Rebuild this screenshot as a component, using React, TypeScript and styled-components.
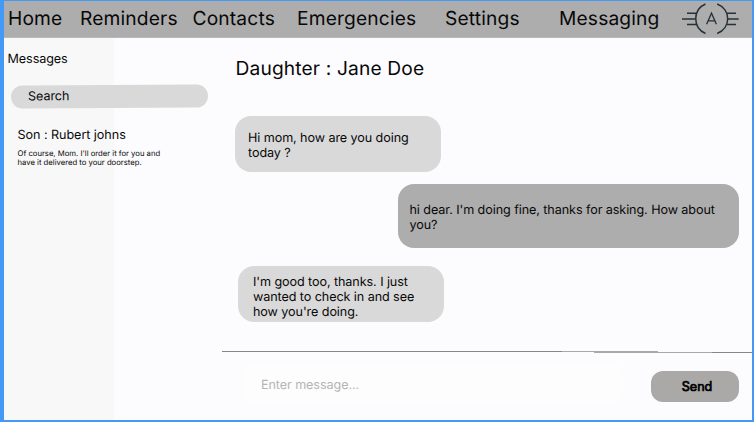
import React from "react";
import styled, { createGlobalStyle } from "styled-components";

const GlobalStyle = createGlobalStyle`
  * { box-sizing: border-box; }
  body {
    margin: 0;
    font-family: Inter, "Liberation Sans", sans-serif;
    font-optical-sizing: none;
    text-rendering: geometricPrecision;
    color: #080808;
  }
  p, h1, h2, h3 { margin: 0; font-weight: 400; }
`;

const Frame = styled.div`
  width: 754px;
  height: 422px;
  overflow: hidden;
  display: flex;
  flex-direction: column;
  background: #fcfcfe;
  border: solid #4499f7;
  border-width: 1px 2px 2px 4px;
`;

const Header = styled.header`
  flex: none;
  height: 37px;
  display: grid;
  grid-template-columns: 72px 112.5px 104.5px 148px 114px 122px 1fr;
  align-items: start;
  padding-left: 4px;
  background: #adadad;
  border-bottom: 1px solid #b9b9b9;
`;

const NavLink = styled.a`
  font-size: 19.2px;
  letter-spacing: 0.16px;
  line-height: 24px;
  padding-top: 5px;
  white-space: nowrap;
  color: #080808;
`;

const Logo = styled.svg`
  display: block;
  width: 60px;
  height: 36px;
`;

const Body = styled.div`
  flex: 1;
  min-height: 0;
  display: grid;
  grid-template-columns: 218px 1fr;
`;

const Sidebar = styled.aside`
  background: linear-gradient(to right, #f8f8f8 109.5px, transparent 109.5px);
`;

const SidebarTitle = styled.h2`
  padding: 13px 0 0 3.5px;
  font-size: 12.6px;
  letter-spacing: -0.08px;
  line-height: 17px;
`;

const Search = styled.div`
  width: 197px;
  height: 22.5px;
  margin: 16.5px 0 0 7.2px;
  padding-left: 17px;
  border-radius: 12px;
  background: #d9d9d9;
  transform: rotate(-0.3deg);
  font-size: 12.6px;
  letter-spacing: -0.08px;
  line-height: 23px;
`;

const Conversation = styled.section`
  padding: 21px 0 0 13.5px;
`;

const ConversationName = styled.h3`
  font-size: 12.6px;
  letter-spacing: -0.05px;
  line-height: 16px;
`;

const Preview = styled.p`
  width: 170px;
  margin-top: 5px;
  font-size: 7.7px;
  line-height: 9.4px;
`;

const Chat = styled.main`
  display: flex;
  flex-direction: column;
`;

const ChatTitle = styled.h1`
  padding: 18px 0 0 13.5px;
  font-size: 19.2px;
  letter-spacing: 0.14px;
  line-height: 24px;
`;

const Thread = styled.div`
  height: 271px;
  display: flex;
  flex-direction: column;
  align-items: flex-start;
  padding: 36px 13px 0 13px;
`;

const Bubble = styled.div<{ $sent?: boolean; $last?: boolean }>`
  width: ${(p) => (p.$sent ? 341 : 206)}px;
  height: ${(p) => (p.$sent ? 64 : 56)}px;
  flex: none;
  align-self: ${(p) => (p.$sent ? "flex-end" : "flex-start")};
  margin: ${(p) => (p.$sent ? "12px 0 18px" : p.$last ? "0 0 0 3px" : "0")};
  padding: ${(p) => (p.$sent ? "18.6px 11.5px 0" : p.$last ? "8.6px 20px 0 15px" : "15px 20px 0 13px")};
  border-radius: 16px;
  background: ${(p) => (p.$sent ? "#adadad" : "#d9d9d9")};
  font-size: 12.6px;
  letter-spacing: -0.08px;
  line-height: 15.2px;
`;

const Divider = styled.svg`
  display: block;
  flex: none;
  width: 100%;
  height: 3px;
`;

const Composer = styled.div`
  display: flex;
  align-items: center;
  justify-content: space-between;
  padding: 11px 13px 0 20px;
`;

const MessageField = styled.div`
  width: 381px;
  height: 38px;
  padding-left: 19px;
  border-radius: 10px;
  background: #fdfdfe;
  color: #b5b5b5;
  font-size: 12.6px;
  letter-spacing: -0.08px;
  line-height: 41px;
`;

const SendButton = styled.button`
  width: 88px;
  height: 31px;
  margin-top: 4px;
  padding: 0 0 0 4px;
  border: 0;
  border-radius: 12px;
  background: #aaa9a8;
  color: #000;
  font: 400 12.6px/31px Inter, sans-serif;
  -webkit-text-stroke: 0.7px #000;
`;

const links = ["Home", "Reminders", "Contacts", "Emergencies", "Settings", "Messaging"];

export default function App() {
  return (
    <>
      <GlobalStyle />
      <Frame>
        <Header>
          {links.map((l) => (
            <NavLink key={l}>{l}</NavLink>
          ))}
          <Logo viewBox="681 1 60 36" fill="none" stroke="#263238" strokeWidth="1.5">
            <path d="M705.500 4C692.500 9.500 692.500 28 705.500 33.500M717.200 4C731.200 9.500 731.200 28 717.200 33.500" />
            <path d="M687 13.200H696.500M682 18.900H695.500M687 24.400H696.500M727 13.200H736M727.500 18.900H738.700M727 24.400H736" />
            <path strokeWidth="1.3" d="M706.600 24.300L711.500 13.200L716.400 24.300M708.200 20.900H714.800" />
          </Logo>
        </Header>
        <Body>
          <Sidebar>
            <SidebarTitle>Messages</SidebarTitle>
            <Search>Search</Search>
            <Conversation>
              <ConversationName>Son : Rubert johns</ConversationName>
              <Preview>
                Of course, Mom. I'll order it for you and
                <br />
                have it delivered to your doorstep.
              </Preview>
            </Conversation>
          </Sidebar>
          <Chat>
            <ChatTitle>Daughter : Jane Doe</ChatTitle>
            <Thread>
              <Bubble>
                Hi mom, how are you doing
                <br />
                today ?
              </Bubble>
              <Bubble $sent>
                hi dear. I'm doing fine, thanks for asking. How about
                <br />
                you?
              </Bubble>
              <Bubble $last>
                I'm good too, thanks. I just
                <br />
                wanted to check in and see
                <br />
                how you're doing.
              </Bubble>
            </Thread>
            <Divider viewBox="0 0 530 3" preserveAspectRatio="none">
              <path d="M0 0.500H340M490 1.500H530" stroke="#87878a" />
              <path d="M340 0.500H436M372 1.500H490" stroke="#a9a9ac" />
            </Divider>
            <Composer>
              <MessageField>Enter message...</MessageField>
              <SendButton>Send</SendButton>
            </Composer>
          </Chat>
        </Body>
      </Frame>
    </>
  );
}
